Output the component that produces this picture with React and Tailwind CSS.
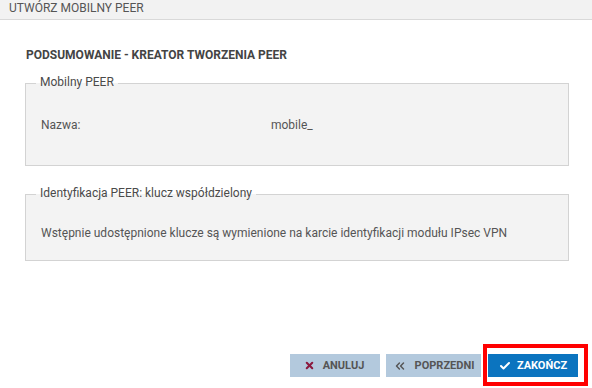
import React from 'react';
import { X, ChevronsLeft, Check } from 'lucide-react';

function Section({ legend, children, className }) {
  return (
    <fieldset className={'border border-[#d3d3d3] bg-[#f3f3f3] ' + className}>
      <legend className="ml-[10px] px-[4px] pb-[3px] text-[12px] leading-[16px] text-[#4a4a4a]">{legend}</legend>
      {children}
    </fieldset>
  );
}

export default function App() {
  return (
    <div className="relative w-[592px] h-[388px] bg-white font-['Roboto',sans-serif] text-[#555] flex flex-col">
      <div className="h-[20px] bg-[#f2f2f2] border-b border-[#d9d9d9] pl-[9px] text-[12px] leading-[16px] text-[#555]">
        UTWÓRZ MOBILNY PEER
      </div>

      <div className="pl-[25px] pr-[23px]">
        <h2 className="mt-[27px] ml-[1px] text-[12px] leading-[16px] font-bold text-[#444]">
          PODSUMOWANIE - KREATOR TWORZENIA PEER
        </h2>

        <Section legend="Mobilny PEER" className="mt-[11px]">
          <div className="flex pl-[15px] pt-[24px] pb-[32px] text-[12px] leading-[16px]">
            <div className="w-[230px]">Nazwa:</div>
            <div>mobile_</div>
          </div>
        </Section>

        <Section legend="Identyfikacja PEER: klucz współdzielony" className="mt-[19px]">
          <div className="pl-[15px] pt-[21px] pb-[19px] text-[12px] leading-[16px]">
            Wstępnie udostępnione klucze są wymienione na karcie identyfikacji modułu IPsec VPN
          </div>
        </Section>
      </div>

      <div className="mt-auto mb-[11px] mr-[14px] flex justify-end gap-[6px] text-[11px] font-bold leading-[23px]">
        <button className="w-[90px] h-[23px] bg-[#b3c9dd] text-[#555] flex items-center justify-center gap-[8px] pr-[2px]">
          <X size={11} strokeWidth={4.5} className="text-[#8b1a3f]" />
          ANULUJ
        </button>
        <button className="w-[95px] h-[23px] bg-[#b3c9dd] text-[#555] flex items-center justify-center gap-[8px]">
          <ChevronsLeft size={14} strokeWidth={2.5} className="text-[#555]" />
          POPRZEDNI
        </button>
        <button className="ml-[1px] w-[90px] h-[23px] bg-[#0b74bf] text-white flex items-center justify-center gap-[6px]">
          <Check size={12} strokeWidth={4} />
          ZAKOŃCZ
        </button>
      </div>

      <div className="absolute left-[483px] top-[344px] w-[105px] h-[42px] border-4 border-[#f00] pointer-events-none" />
    </div>
  );
}
